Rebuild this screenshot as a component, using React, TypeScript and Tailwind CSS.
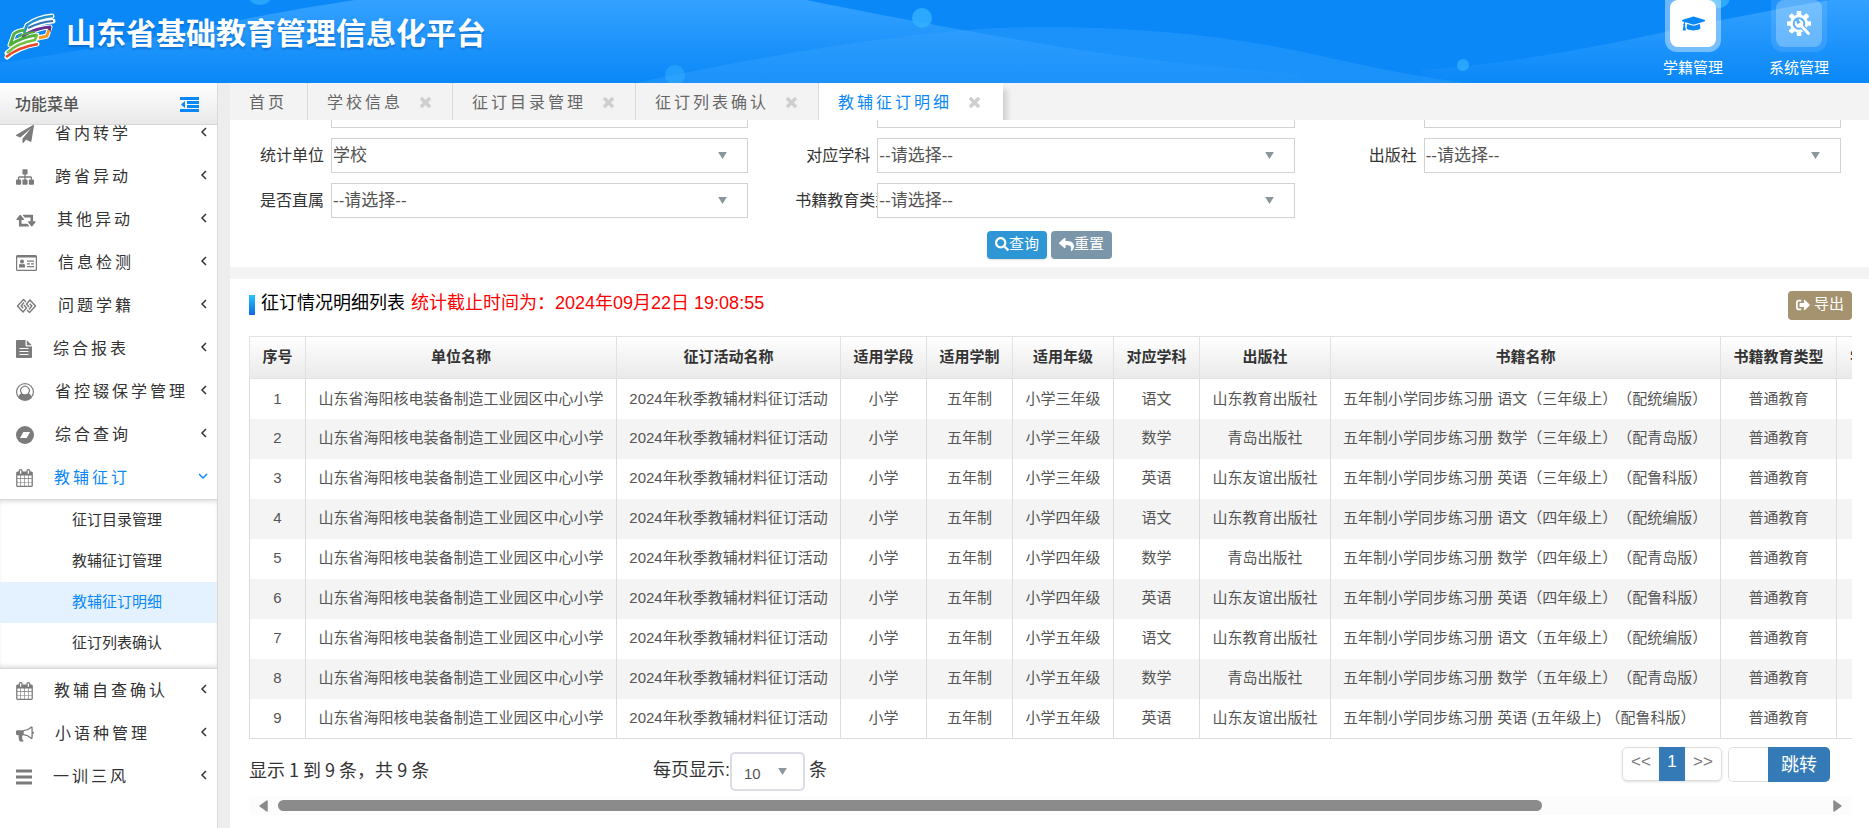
import { useState } from "react";
import type { ReactNode } from "react";
import { FaGraduationCap, FaReply, FaSearch, FaSignOutAlt } from "react-icons/fa";

const Glyph = ({ box, d, className }: { box: string; d: string; className: string }) => (
  <svg viewBox={box} className={className} fill="currentColor" aria-hidden="true">
    <path d={d} />
  </svg>
);

const PLANE =
  "M1764 11q33 24 27 64l-256 1536q-5 29-32 45-14 8-31 8-11 0-24-5l-453-185-242 295q-18 23-49 23-13 0-22-4-19-7-30.5-23.5t-11.5-36.5v-349l864-1059-1069 925-395-162q-37-14-40-55-2-40 32-59l1664-960q15-9 32-9 20 0 36 11z";
const SITEMAP =
  "M1792 1248v320q0 40-28 68t-68 28h-320q-40 0-68-28t-28-68v-320q0-40 28-68t68-28h96v-192h-512v192h96q40 0 68 28t28 68v320q0 40-28 68t-68 28h-320q-40 0-68-28t-28-68v-320q0-40 28-68t68-28h96v-192h-512v192h96q40 0 68 28t28 68v320q0 40-28 68t-68 28h-320q-40 0-68-28t-28-68v-320q0-40 28-68t68-28h96v-192q0-52 38-90t90-38h512v-192h-96q-40 0-68-28t-28-68v-320q0-40 28-68t68-28h320q40 0 68 28t28 68v320q0 40-28 68t-68 28h-96v192h512q52 0 90 38t38 90v192h96q40 0 68 28t28 68z";
const RETWEET =
  "M1280 1504q0 13-9.5 22.5t-22.5 9.5h-960q-8 0-13.5-2t-9-7-5.5-8-3-11.5-1-11.5v-600h-192q-26 0-45-19t-19-45q0-24 15-41l320-384q19-22 49-22t49 22l320 384q15 17 15 41 0 26-19 45t-45 19h-192v384h576q16 0 25 11l160 192q7 10 7 21zm640-416q0 24-15 41l-320 384q-20 23-49 23t-49-23l-320-384q-15-17-15-41 0-26 19-45t45-19h192v-384h-576q-16 0-25-12l-160-192q-7-9-7-20 0-13 9.5-22.5t22.5-9.5h960q8 0 13.5 2t9 7 5.5 8 3 11.5 1 11.5v600h192q26 0 45 19t19 45z";
const CALENDAR =
  "M128 1664h288v-288h-288v288zm352 0h320v-288h-320v288zm-352-352h288v-320h-288v320zm352 0h320v-320h-320v320zm-352-384h288v-288h-288v288zm736 736h320v-288h-320v288zm-384-736h320v-288h-320v288zm768 736h288v-288h-288v288zm-384-352h320v-320h-320v320zm-352-864v-288q0-13-9.5-22.5t-22.5-9.5h-64q-13 0-22.5 9.5t-9.5 22.5v288q0 13 9.5 22.5t22.5 9.5h64q13 0 22.5-9.5t9.5-22.5zm736 864h288v-320h-288v320zm-384-384h320v-288h-320v288zm384 0h288v-288h-288v288zm32-480v-288q0-13-9.5-22.5t-22.5-9.5h-64q-13 0-22.5 9.5t-9.5 22.5v288q0 13 9.5 22.5t22.5 9.5h64q13 0 22.5-9.5t9.5-22.5zm384-64v1280q0 52-38 90t-90 38h-1408q-52 0-90-38t-38-90v-1280q0-52 38-90t90-38h128v-96q0-66 47-113t113-47h64q66 0 113 47t47 113v96h384v-96q0-66 47-113t113-47h64q66 0 113 47t47 113v96h128q52 0 90 38t38 90z";
const BULLHORN =
  "M1664 640q53 0 90.5 37.5t37.5 90.5-37.5 90.5-90.5 37.5v384q0 52-38 90t-90 38q-417-347-812-380-58 19-91 66t-31 100.5 40 92.5q-20 33-23 65.5t6 58 33.5 55 48 50 61.5 50.5q-29 58-111.5 83t-168.5 11.5-132-55.5q-7-23-29.5-87.5t-32-94.5-23-89-15-101 3.5-98.5 22-110.5h-122q-66 0-113-47t-47-113v-192q0-66 47-113t113-47h480q435 0 896-384 52 0 90 38t38 90v384zm-128 604v-954q-394 302-768 343v270q377 42 768 341z";
const TIMES =
  "M1490 1322q0 40-28 68l-136 136q-28 28-68 28t-68-28l-294-294-294 294q-28 28-68 28t-68-28l-136-136q-28-28-28-68t28-68l294-294-294-294q-28-28-28-68t28-68l136-136q28-28 68-28t68 28l294 294 294-294q28-28 68-28t68 28l136 136q28 28 28 68t-28 68l-294 294 294 294q28 28 28 68z";
const BARS = "M0 1.500h16v3H0zM0 7.500h16v3H0zM0 13.500h16v3H0z";
const OUTDENT = "M0 0h19v3H0zM7 4h12v3H7zM7 8h12v3H7zM0 12h19v3H0zM5 4v7L1 7.500z";

const IdCardIcon = () => (
  <svg viewBox="0 0 21 16" className="h-4 w-[21px]" fill="currentColor" aria-hidden="true">
    <path
      fillRule="evenodd"
      d="M1.5 0h18A1.5 1.5 0 0 1 21 1.5v13a1.5 1.5 0 0 1-1.5 1.5h-18A1.5 1.5 0 0 1 0 14.500v-13A1.500 1.500 0 0 1 1.500 0zM1.200 2.500v12.200h18.600V2.500z"
    />
    <circle cx="6" cy="6.500" r="2" />
    <path d="M3 12.500V10.500a1.800 1.800 0 0 1 1.600-1.800q1.400 1 2.800 0A1.800 1.800 0 0 1 9 10.500v2zM11 5.500h7v1.200h-7zM11 8.200h3v1.200h-3zM15 8.200h3v1.200h-3zM11 11h7v1.200h-7z" />
  </svg>
);

const LinkIcon = () => (
  <svg viewBox="0 0 21 16" className="h-4 w-[21px]" fill="none" stroke="currentColor" strokeWidth="1.4" strokeLinejoin="round" aria-hidden="true">
    <path d="M10 4 7.500 1.500 1.500 8l5.500 6 3.500-4L8 7M11 12l2.500 2.500L19.500 8l-5.500-6-3.500 4L13 9M8 4.500 5.200 8l2 2.300M13 11.500 15.800 8l-2-2.300" />
  </svg>
);

const FileIcon = () => (
  <svg viewBox="0 0 16 18" className="h-[18px] w-4" aria-hidden="true">
    <path d="M1 0h8.500v5.500q0 1 1 1H16V17q0 1-1 1H1q-1 0-1-1V1q0-1 1-1zM10.800 0.200 15.800 5.200h-5z" fill="currentColor" />
    <path d="M3.500 8.500h9M3.500 11.500h9M3.500 14.500h9" stroke="#fff" strokeWidth="1.200" />
  </svg>
);

const UserIcon = () => (
  <svg viewBox="0 0 18 18" className="size-[18px]" aria-hidden="true">
    <circle cx="9" cy="9" r="9" fill="currentColor" />
    <circle cx="9" cy="7" r="4.200" fill="#fff" />
    <path d="M9 1.300a7.700 7.700 0 0 0-6.200 12.300Q3.500 10.800 5.800 10q3.200 2.600 6.400 0 2.300.8 3 3.600A7.700 7.700 0 0 0 9 1.300z" fill="#fff" />
    <path d="M5.600 10.200a4.300 4.300 0 1 1 6.800 0" fill="none" stroke="currentColor" strokeWidth="1.200" />
    <path d="M5.700 10.300Q9 13 12.300 10.300 14.500 11 15 13.800 9 19.500 3 13.800 3.500 11 5.700 10.300z" fill="currentColor" />
  </svg>
);

const CompassIcon = () => (
  <svg viewBox="0 0 18 18" className="size-[18px]" aria-hidden="true">
    <circle cx="9" cy="9" r="9" fill="currentColor" />
    <path d="M7.400 6h6.600l-3.300 6H4z" fill="#fff" />
  </svg>
);

const Logo = () => (
  <svg viewBox="0 0 52 48" className="h-12 w-[52px]" fill="none" strokeLinejoin="round" strokeLinecap="round" aria-hidden="true">
    <g stroke="#fff" strokeWidth="5">
      <path d="M20 20l3-7Q34 5 48 4M25 16Q36 10 49 9M20 23Q33 16 46 15l-3 9-9 2" />
      <path d="M21 18Q13 19 10 22L6 33Q18 25 33 23l-2 5Q13 31 3 41M3 45Q15 35 33 32" />
    </g>
    <g strokeLinecap="butt">
      <path d="M20 21l3-8Q34 5 49 4" stroke="#1e8fd2" strokeWidth="2.600" />
      <path d="M24 16Q36 10 49 9" stroke="#2f72b4" strokeWidth="2" />
      <path d="M19 26l1-3Q33 16 46 15l-1 5" stroke="#66308f" strokeWidth="3" />
      <path d="M45 18l-2 6-8 2" stroke="#f39a20" strokeWidth="3" />
      <path d="M21 18Q13 19 10 22L6 33Q18 25 33 23" stroke="#4fae3e" strokeWidth="3" />
      <path d="M14 25Q20 21 31 20" stroke="#4fae3e" strokeWidth="2" />
      <path d="M33 22l-2 6Q13 31 3 41" stroke="#72c043" strokeWidth="2.600" />
      <path d="M2 45Q15 35 34 32" stroke="#e5482d" strokeWidth="2.600" />
    </g>
  </svg>
);

const GearIcon = () => (
  <svg viewBox="0 0 24 25" className="h-[25px] w-6" aria-hidden="true">
    <g fill="#fff">
      <circle cx="12" cy="12.500" r="9" />
      {[0, 45, 90, 135, 180, 225, 270, 315].map((a) => (
        <rect key={a} x="9.700" y="0" width="4.600" height="6" rx="1" transform={`rotate(${a} 12 12.500)`} />
      ))}
    </g>
    <circle cx="12" cy="12.500" r="6.200" fill="#5eb2fc" />
    <path d="M14 14.500l9 9" stroke="#5eb2fc" strokeWidth="5" />
    <circle cx="12" cy="12.500" r="4.200" fill="#fff" />
    <path d="M9.500 7.500l2.500 5" stroke="#5eb2fc" strokeWidth="2.800" />
    <path d="M13 13.500l8.500 9" stroke="#fff" strokeWidth="3" strokeLinecap="round" />
  </svg>
);

type MenuEntry = { label: string; icon: ReactNode; open?: boolean };

const menuTop: MenuEntry[] = [
  { label: "省内转学", icon: <Glyph box="0 0 1792 1792" d={PLANE} className="size-[18px]" /> },
  { label: "跨省异动", icon: <Glyph box="0 0 1792 1792" d={SITEMAP} className="size-[18px]" /> },
  { label: "其他异动", icon: <Glyph box="0 0 1920 1792" d={RETWEET} className="h-[18px] w-5" /> },
  { label: "信息检测", icon: <IdCardIcon /> },
  { label: "问题学籍", icon: <LinkIcon /> },
  { label: "综合报表", icon: <FileIcon /> },
  { label: "省控辍保学管理", icon: <UserIcon /> },
  { label: "综合查询", icon: <CompassIcon /> },
  { label: "教辅征订", icon: <Glyph box="0 0 1664 1792" d={CALENDAR} className="h-[18px] w-[17px]" />, open: true },
];

const subMenu = ["征订目录管理", "教辅征订管理", "教辅征订明细", "征订列表确认"];

const menuBottom: MenuEntry[] = [
  { label: "教辅自查确认", icon: <Glyph box="0 0 1664 1792" d={CALENDAR} className="h-[18px] w-[17px]" /> },
  { label: "小语种管理", icon: <Glyph box="0 0 1792 1792" d={BULLHORN} className="size-[18px]" /> },
  { label: "一训三风", icon: <Glyph box="0 0 16 18" d={BARS} className="h-[18px] w-4" /> },
];

const tabs = ["首页", "学校信息", "征订目录管理", "征订列表确认", "教辅征订明细"];

const headers = [
  "序号", "单位名称", "征订活动名称", "适用学段", "适用学制", "适用年级",
  "对应学科", "出版社", "书籍名称", "书籍教育类型", "学期",
];

const rows = [
  ["小学三年级", "语文", "山东教育出版社", "五年制小学同步练习册 语文（三年级上）（配统编版）"],
  ["小学三年级", "数学", "青岛出版社", "五年制小学同步练习册 数学（三年级上）（配青岛版）"],
  ["小学三年级", "英语", "山东友谊出版社", "五年制小学同步练习册 英语（三年级上）（配鲁科版）"],
  ["小学四年级", "语文", "山东教育出版社", "五年制小学同步练习册 语文（四年级上）（配统编版）"],
  ["小学四年级", "数学", "青岛出版社", "五年制小学同步练习册 数学（四年级上）（配青岛版）"],
  ["小学四年级", "英语", "山东友谊出版社", "五年制小学同步练习册 英语（四年级上）（配鲁科版）"],
  ["小学五年级", "语文", "山东教育出版社", "五年制小学同步练习册 语文（五年级上）（配统编版）"],
  ["小学五年级", "数学", "青岛出版社", "五年制小学同步练习册 数学（五年级上）（配青岛版）"],
  ["小学五年级", "英语", "山东友谊出版社", "五年制小学同步练习册 英语 (五年级上) （配鲁科版）"],
];

function Header() {
  return (
    <header className="relative flex h-[83px] shrink-0 items-start justify-between overflow-hidden bg-[#0a88f8]">
      <svg viewBox="0 0 1869 83" preserveAspectRatio="none" className="absolute inset-0 size-full" aria-hidden="true">
        <defs>
          <linearGradient id="wave" x1="0" y1="0" x2="0" y2="83" gradientUnits="userSpaceOnUse">
            <stop offset="0" stopColor="#34a1ff" />
            <stop offset="1" stopColor="#0a88f8" />
          </linearGradient>
        </defs>
        <path d="M0 63Q140 42 245 19Q300 8 355 0H806Q960 31 1080 50Q1180 65 1300 74L1300 83H0Z" fill="url(#wave)" />
        <path d="M1422 70Q1530 62 1665 32Q1745 14 1830 0H1869V83H1422Z" fill="url(#wave)" />
        <path d="M636 83Q900 27 1040 27Q1200 27 1330 58Q1400 74 1465 83Z" fill="#3ba5ff" fillOpacity=".35" />
        <g fill="#35b0ff">
          <circle cx="260" cy="-8" r="13" fillOpacity=".7" />
          <circle cx="922" cy="18" r="10" fillOpacity=".8" />
          <circle cx="675" cy="75" r="10" fillOpacity=".5" />
          <circle cx="1463" cy="65" r="6" fillOpacity=".7" />
          <circle cx="1719" cy="-3" r="11" fillOpacity=".8" />
        </g>
      </svg>
      <div className="relative flex items-center gap-[10px] pt-3 pl-1">
        <Logo />
        <h1 className="mb-1 text-[30px] leading-10 font-bold text-white [text-shadow:0_2px_2px_rgba(0,60,140,.35)]">
          山东省基础教育管理信息化平台
        </h1>
      </div>
      <nav className="relative flex gap-[46px] pr-10 text-[15px] text-white">
        <a href="#student" className="flex w-[60px] flex-col items-center">
          <span className="flex h-[52px] w-14 flex-col rounded-b-xl bg-white/40 px-[5px] pb-[5px]">
            <span className="flex flex-1 items-center justify-center rounded-lg bg-white text-[#0a88f8]">
              <FaGraduationCap className="size-[23px]" />
            </span>
          </span>
          <span className="mt-1 leading-6 whitespace-nowrap">学籍管理</span>
        </a>
        <a href="#system" className="flex w-[60px] flex-col items-center">
          <span className="flex h-[52px] w-14 flex-col rounded-b-xl bg-white/10 px-[5px] pb-[5px]">
            <span className="flex flex-1 items-center justify-center rounded-lg bg-white/25">
              <GearIcon />
            </span>
          </span>
          <span className="mt-1 leading-6 whitespace-nowrap">系统管理</span>
        </a>
      </nav>
    </header>
  );
}

function MenuItem({ label, icon, open }: MenuEntry) {
  return (
    <li>
      <a
        href="#menu"
        className={`flex h-[43px] items-center pr-2 pl-4 text-base tracking-[3px] ${open ? "text-[#0a88f8]" : "text-[#333]"}`}
      >
        <span className="mr-[21px] shrink-0 text-[#7b7b7b]">{icon}</span>
        <span className="flex-1 whitespace-nowrap">{label}</span>
        <svg viewBox="0 0 10 10" className="mb-1 size-[10px]" fill="none" stroke="currentColor" strokeWidth="1.5" aria-hidden="true">
          <path d={open ? "M0 3l4 4 4-4" : "M7 1 3 5l4 4"} />
        </svg>
      </a>
    </li>
  );
}

function Sidebar() {
  return (
    <aside className="flex w-[218px] shrink-0 flex-col border-r border-[#d9d9d9] bg-white">
      <div className="z-10 flex h-[42px] shrink-0 items-center justify-between border-b border-[#d5d5d5] bg-gradient-to-b from-white to-[#e9e9e9] pt-0.5 pr-[18px] pl-[15px]">
        <span className="text-base font-medium text-[#555]">功能菜单</span>
        <button type="button" aria-label="收起菜单" className="text-[#0a88f8]">
          <Glyph box="0 0 19 15" d={OUTDENT} className="h-[15px] w-[19px]" />
        </button>
      </div>
      <div className="overflow-hidden">
        <ul className="-mt-[13px]">
          {menuTop.map((m) => (
            <MenuItem key={m.label} {...m} />
          ))}
        </ul>
        <ul className="border-y border-[#d9d9d9] pb-1 shadow-[inset_0_4px_4px_-2px_rgba(0,0,0,.12),inset_0_-4px_4px_-2px_rgba(0,0,0,.12)]">
          {subMenu.map((s) => (
            <li key={s}>
              <a
                href="#sub"
                className={`flex h-[41px] items-center pl-[72px] text-[15px] ${
                  s === "教辅征订明细" ? "bg-[#e4f2ff] text-[#0a88f8]" : "text-[#333]"
                }`}
              >
                {s}
              </a>
            </li>
          ))}
        </ul>
        <ul>
          {menuBottom.map((m) => (
            <MenuItem key={m.label} {...m} />
          ))}
        </ul>
      </div>
    </aside>
  );
}

function Tabs() {
  return (
    <div className="flex h-[37px] shrink-0 bg-[#f3f3f3] text-base tracking-[3px] text-[#666]">
      {tabs.map((t, i) => {
        const active = i === tabs.length - 1;
        return (
          <div
            key={t}
            className={`flex items-center pt-0.5 pl-[19px] ${
              active
                ? "bg-white pr-[22px] text-[#0a88f8] shadow-[4px_6px_6px_rgba(0,0,0,.15)] [clip-path:inset(0_-12px_0_0)]"
                : "border-r border-[#d9d9d9] pr-5"
            }`}
          >
            <a href="#tab" className="whitespace-nowrap">{t}</a>
            {i > 0 && (
              <button type="button" aria-label={`关闭${t}`} className="ml-4 text-[#cfcfcf]">
                <Glyph box="192 256 1408 1408" d={TIMES} className="size-[13px]" />
              </button>
            )}
          </div>
        );
      })}
    </div>
  );
}

const Caret = ({ className }: { className: string }) => (
  <svg viewBox="0 0 10 8" className={`pointer-events-none absolute h-[7px] w-[9px] ${className}`} aria-hidden="true">
    <path d="M0 0h10L5 8z" fill="#8a979c" />
  </svg>
);

function Field({ id, label, value }: { id: string; label?: string; value?: string }) {
  return (
    <div className="flex h-[35px] items-center pr-7 pl-[19px]">
      <label htmlFor={id} className="w-[82px] shrink-0 pr-[7px] text-right text-base whitespace-nowrap text-[#333]">
        {label}
      </label>
      <div className="relative z-10 flex-1">
        <select
          id={id}
          className="block h-[35px] w-full appearance-none border border-[#d2d2d2] bg-white pr-10 pl-px text-[17px] text-[#555]"
        >
          <option>{value}</option>
        </select>
        <Caret className="top-[14px] right-[21px]" />
      </div>
    </div>
  );
}

function SearchForm() {
  return (
    <form className="overflow-hidden bg-white pb-2" onSubmit={(e) => e.preventDefault()}>
      <div className="-mt-[27px] grid grid-cols-3 gap-y-[10px]">
        <Field id="grade" />
        <Field id="stage" />
        <Field id="system" />
        <Field id="unit" label="统计单位" value="学校" />
        <Field id="subject" label="对应学科" value="--请选择--" />
        <Field id="press" label="出版社" value="--请选择--" />
        <Field id="direct" label="是否直属" value="--请选择--" />
        <Field id="kind" label="书籍教育类型" value="--请选择--" />
      </div>
      <div className="mt-[13px] flex justify-center gap-1 text-[15px] text-white">
        <button type="submit" className="flex h-7 items-center rounded bg-[#2f96d5] px-2 pb-0.5 shadow-sm">
          <FaSearch className="size-[14px]" />
          查询
        </button>
        <button type="reset" className="flex h-7 items-center rounded bg-[#7b95a9] px-2 pb-0.5">
          <FaReply className="size-[15px]" />
          重置
        </button>
      </div>
    </form>
  );
}

function DetailTable() {
  return (
    <div className="mt-4 overflow-hidden">
      <table className="w-[1645px] table-fixed border-collapse border border-[#dcdcdc] text-[15px] text-[#555]">
        <colgroup>
          <col className="w-14" />
          <col className="w-[311px]" />
          <col className="w-[224px]" />
          <col className="w-[86px]" />
          <col className="w-[86px]" />
          <col className="w-[101px]" />
          <col className="w-[86px]" />
          <col className="w-[131px]" />
          <col className="w-[390px]" />
          <col className="w-[116px]" />
          <col />
        </colgroup>
        <thead>
          <tr className="h-[42px] bg-gradient-to-b from-white to-[#e9e9e9]">
            {headers.map((h) => (
              <th key={h} className="border border-[#dfe3e6] p-0 font-bold whitespace-nowrap text-[#333]">
                {h}
              </th>
            ))}
          </tr>
        </thead>
        <tbody>
          {rows.map(([grade, subject, press, book], i) => (
            <tr key={i} className="h-10 text-center whitespace-nowrap even:bg-[#f4f4f4]">
              <td className="border-x border-[#dcdcdc] p-0">{i + 1}</td>
              <td className="border-x border-[#dcdcdc] p-0">山东省海阳核电装备制造工业园区中心小学</td>
              <td className="border-x border-[#dcdcdc] p-0">2024年秋季教辅材料征订活动</td>
              <td className="border-x border-[#dcdcdc] p-0">小学</td>
              <td className="border-x border-[#dcdcdc] p-0">五年制</td>
              <td className="border-x border-[#dcdcdc] p-0">{grade}</td>
              <td className="border-x border-[#dcdcdc] p-0">{subject}</td>
              <td className="border-x border-[#dcdcdc] p-0">{press}</td>
              <td className="border-x border-[#dcdcdc] p-0 pl-3 text-left">{book}</td>
              <td className="border-x border-[#dcdcdc] p-0">普通教育</td>
              <td className="border-x border-[#dcdcdc] p-0"></td>
            </tr>
          ))}
        </tbody>
      </table>
    </div>
  );
}

function TableFooter() {
  const [size, setSize] = useState("10");
  return (
    <div className="flex h-[57px] items-start text-lg text-[#333]">
      <p className="w-[404px] pt-4 font-['Noto_Sans_CJK_SC',sans-serif] leading-7">显示 1 到 9 条，共 9 条</p>
      <div className="flex flex-1 items-start">
        <label htmlFor="size" className="pt-[17px] leading-7">每页显示:</label>
        <div className="relative mt-[13px]">
          <select
            id="size"
            value={size}
            onChange={(e) => setSize(e.target.value)}
            className="block h-[39px] w-[75px] appearance-none rounded-[5px] border-2 border-[#dcdce6] bg-white pt-1 pl-3 text-[15px] text-[#555]"
          >
            <option>10</option>
            <option>20</option>
          </select>
          <Caret className="top-4 right-[18px]" />
        </div>
        <span className="pt-[17px] pl-1 leading-7">条</span>
      </div>
      <div className="flex items-start gap-1.5 pt-2 pr-[22px]">
        <div className="flex h-[34px] rounded-[5px] border border-[#ddd] text-[17px] text-[#777] shadow-sm">
          <button type="button" className="w-9 pb-1">&lt;&lt;</button>
          <button type="button" className="-my-px w-[26px] bg-[#337ab7] pb-1 text-white">1</button>
          <button type="button" className="w-9 pb-1">&gt;&gt;</button>
        </div>
        <div className="flex h-[35px] overflow-hidden rounded-[5px]">
          <input aria-label="页码" className="w-10 rounded-l-[5px] border border-r-0 border-[#ddd] px-1" />
          <button type="button" className="w-[62px] bg-[#337ab7] text-lg text-white">跳转</button>
        </div>
      </div>
    </div>
  );
}

function ScrollTrack() {
  return (
    <div className="flex h-[19px] items-center bg-[#fcfcfc] px-[10px]" aria-hidden="true">
      <svg viewBox="0 0 9 12" className="h-3 w-[9px]">
        <path d="M8 1v10L1 6z" fill="#8b8b8b" stroke="#8b8b8b" strokeWidth="1.500" strokeLinejoin="round" />
      </svg>
      <div className="flex-1 px-[10px]">
        <div className="h-[11px] w-9/11 rounded-full bg-[#8b8b8b]" />
      </div>
      <svg viewBox="0 0 9 12" className="h-3 w-[9px]">
        <path d="M1 1v10l7-5z" fill="#8b8b8b" stroke="#8b8b8b" strokeWidth="1.500" strokeLinejoin="round" />
      </svg>
    </div>
  );
}

export default function App() {
  return (
    <div className="flex min-h-screen flex-col overflow-hidden bg-[#ededed] font-['Liberation_Sans','Noto_Sans_CJK_SC',sans-serif] [text-spacing-trim:space-all]">
      <Header />
      <div className="flex flex-1">
        <Sidebar />
        <main className="ml-3 flex min-w-0 flex-1 flex-col bg-[#f3f3f3]">
          <Tabs />
          <SearchForm />
          <section className="mt-3 flex-1 bg-white pr-[17px] pl-[19px]">
            <div className="flex items-start pt-3">
              <h2 className="flex flex-1 items-center text-lg leading-6 text-black">
                <span className="mt-1 mr-1.5 h-5 w-[6px] bg-gradient-to-b from-[#29c4ff] to-[#1468e0]" />
                征订情况明细列表
                <span className="ml-1.5 text-[#f00]">统计截止时间为：2024年09月22日 19:08:55</span>
              </h2>
              <button type="button" className="flex h-[29px] items-center gap-1 rounded bg-[#a59370] px-2 pb-0.5 text-[15px] text-white">
                <FaSignOutAlt className="size-[14px]" />
                导出
              </button>
            </div>
            <DetailTable />
            <TableFooter />
            <ScrollTrack />
          </section>
        </main>
      </div>
    </div>
  );
}
